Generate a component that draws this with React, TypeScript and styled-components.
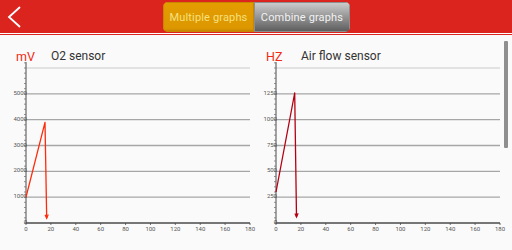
import React from 'react'
import styled, { createGlobalStyle } from 'styled-components'

const GlobalStyle = createGlobalStyle`
  html, body {
    margin: 0;
    padding: 0;
    background: #fafafa;
  }
  body {
    font-family: Roboto, "Noto Sans", Arial, sans-serif;
  }
`

const Screen = styled.div`
  width: 512px;
  height: 250px;
  overflow: hidden;
  display: flex;
  flex-direction: column;
  background: #fafafa;
`

const Header = styled.div`
  position: relative;
  height: 33px;
  background: #dc241f;
  display: flex;
  align-items: center;
  justify-content: center;
  border-bottom: 1px solid #ffffff;
  box-shadow: 0 1px 0 #dc241f;
  margin-bottom: 1px;
`

const BackButton = styled.div`
  position: absolute;
  left: 4px;
  top: 4px;
  width: 20px;
  height: 26px;
  display: flex;
  align-items: center;
  justify-content: center;
`

const Segmented = styled.div`
  display: flex;
  height: 30px;
  margin-top: 1px;
  margin-left: 1px;
  border-radius: 5px;
  overflow: hidden;
`

const Segment = styled.div<{ $active?: boolean }>`
  display: flex;
  align-items: center;
  justify-content: center;
  width: ${p => (p.$active ? '91px' : '96px')};
  font-size: 11px;
  letter-spacing: 0.15px;
  color: ${p => (p.$active ? '#f6e07c' : '#f2f2f2')};
  background: ${p =>
    p.$active
      ? 'linear-gradient(#e39d00, #dc9600)'
      : 'linear-gradient(#cfcfcf 0%, #9a9a9a 45%, #5a5a5a 100%)'};
  box-shadow: ${p =>
    p.$active
      ? 'inset 0 0 0 1px #c98700, inset 0 -2px 2px rgba(150, 90, 0, 0.35)'
      : 'inset 0 0 0 1px #8e8e8e'};
`

const Content = styled.div`
  position: relative;
  flex: 1;
  display: flex;
`

const Panel = styled.div`
  width: 250px;
  display: flex;
  flex-direction: column;
`

const TitleRow = styled.div`
  display: flex;
  align-items: center;
  height: 14px;
  padding: 14px 0 0 16px;
  font-size: 12px;
`

const Unit = styled.span`
  color: #f02a14;
  width: 35px;
  font-size: 12.5px;
`

const Title = styled.span`
  color: #333333;
`

const ScrollThumb = styled.div`
  position: absolute;
  left: 504px;
  top: 6px;
  width: 4px;
  height: 107px;
  background: #8f8f8f;
  border-radius: 1px;
`

type Point = [number, number]

interface ChartProps {
  unit: string
  title: string
  max: number
  step: number
  color: string
  points: Point[]
}

const X0 = 26
const X1 = 250
const Y0 = 160
const Y1 = 5

const Chart: React.FC<ChartProps> = ({ unit, title, max, step, color, points }) => {
  const sx = (v: number) => X0 + (v / 180) * (X1 - X0)
  const sy = (v: number) => Y0 - (v / max) * (Y0 - Y1)
  const rows = Math.round(max / step)
  const gap = (Y0 - Y1) / rows

  const grid = Array.from({ length: rows + 1 }, (_, i) => i)
  const minors = Array.from({ length: rows * 5 + 2 }, (_, i) => Y0 - (i * gap) / 5)
  const xs = Array.from({ length: 10 }, (_, i) => i * 20)

  const path = points.map(([x, y], i) => `${i ? 'L' : 'M'}${sx(x).toFixed(1)} ${sy(y).toFixed(1)}`).join(' ')
  const [ex, ey] = points[points.length - 1]
  const tipX = sx(ex)
  const tipY = sy(ey)

  return (
    <Panel>
      <TitleRow>
        <Unit>{unit}</Unit>
        <Title>{title}</Title>
      </TitleRow>
      <svg width="250" height="180" style={{ overflow: 'visible' }}>
        {grid.map(i => (
          <line
            key={i}
            x1={X0}
            x2={X1}
            y1={Y0 - i * gap}
            y2={Y0 - i * gap}
            stroke={i === 0 ? '#4a4a4a' : i === rows ? '#dadada' : '#a6a6a6'}
            strokeWidth={i === 0 ? 1.3 : 1.4}
          />
        ))}
        <line x1={X0} x2={X0} y1={Y1 - 6} y2={Y0} stroke="#4a4a4a" strokeWidth={1} />
        {minors.map((y, i) => (
          <line key={i} x1={X0 - 2} x2={X0} y1={y} y2={y} stroke="#777" strokeWidth={0.8} />
        ))}
        {grid.slice(0, rows).map(i => (
          <text
            key={i}
            x={X0 + 1}
            y={Y0 - i * gap + 1}
            textAnchor="end"
            fontSize="6"
            fill="#555"
            fontFamily="Roboto, sans-serif"
          >
            {i * step}
          </text>
        ))}
        {xs.map(v => (
          <g key={v}>
            <line x1={sx(v)} x2={sx(v)} y1={Y0} y2={Y0 + 2} stroke="#4a4a4a" strokeWidth={0.8} />
            <text
              x={sx(v)}
              y={Y0 + 8}
              textAnchor="middle"
              fontSize="6"
              fill="#555"
              fontFamily="Roboto, sans-serif"
            >
              {v}
            </text>
          </g>
        ))}
        <path d={path} fill="none" stroke={color} strokeWidth={1.3} strokeLinejoin="round" />
        <path
          d={`M${tipX - 1.6} ${tipY - 3.5} L${tipX} ${tipY} L${tipX + 1.6} ${tipY - 3.8}`}
          fill="none"
          stroke={color}
          strokeWidth={1.2}
        />
      </svg>
    </Panel>
  )
}

const App: React.FC = () => {
  return (
    <Screen>
      <GlobalStyle />
      <Header>
        <BackButton>
          <svg width="14" height="22" viewBox="0 0 14 22">
            <path d="M12.5 1.5 L2 11 L12.5 20.5" fill="none" stroke="#fff" strokeWidth="1.8" strokeLinecap="round" />
          </svg>
        </BackButton>
        <Segmented>
          <Segment $active>Multiple graphs</Segment>
          <Segment>Combine graphs</Segment>
        </Segmented>
      </Header>
      <Content>
        <Chart
          unit="mV"
          title="O2 sensor"
          max={6000}
          step={1000}
          color="#ff2a0a"
          points={[
            [0, 1000],
            [15.3, 3900],
            [16.6, 180],
          ]}
        />
        <Chart
          unit="HZ"
          title="Air flow sensor"
          max={1500}
          step={250}
          color="#b40012"
          points={[
            [0, 300],
            [15, 1258],
            [16.5, 58],
          ]}
        />
        <ScrollThumb />
      </Content>
    </Screen>
  )
}

export default App
